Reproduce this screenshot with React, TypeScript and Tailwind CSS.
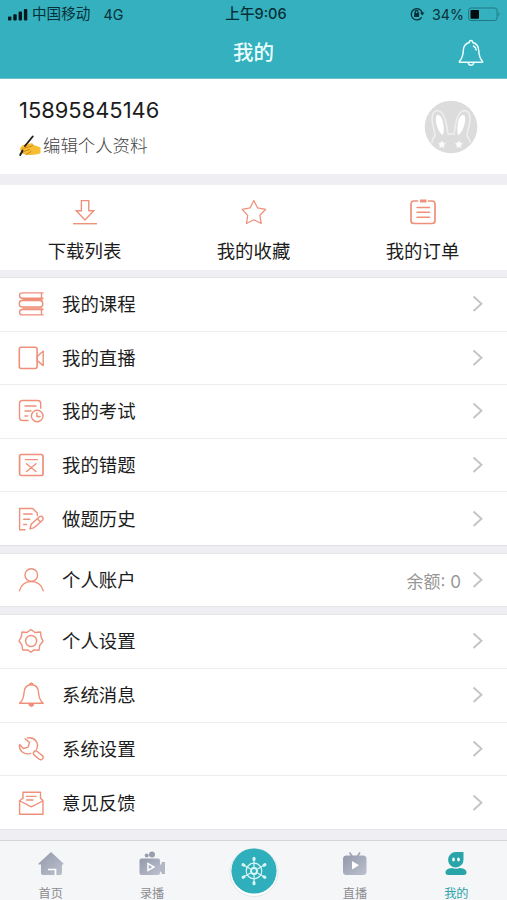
import type { ReactNode } from "react";

const CORAL = "#ee907a";

function LineIcon({ children, size = 26 }: { children: ReactNode; size?: number }) {
  return (
    <svg
      width={size}
      height={size}
      viewBox="0 0 26 26"
      fill="none"
      stroke={CORAL}
      strokeWidth="1.4"
      strokeLinecap="round"
      strokeLinejoin="round"
      className="shrink-0"
    >
      {children}
    </svg>
  );
}

const icons = {
  download: (
    <LineIcon>
      <path d="M9.4 1.6h7.4v10.2h5L13 21 4.3 11.8h5.1z" strokeLinejoin="miter" />
      <path d="M1 24.7h24" strokeLinecap="butt" />
    </LineIcon>
  ),
  star: (
    <LineIcon>
      <path d="M12.8 1.5l3.7 7.3 8.2 1.5-5.8 6 1.3 8.2-7.4-3.7-7.3 3.7 1.2-8.2-5.500-6 8-1.500z" strokeWidth="1.250" />
    </LineIcon>
  ),
  order: (
    <LineIcon>
      <path d="M7.5 2H4Q1 2 1 5v16.5q0 3 3 3h18q3 0 3-3V5q0-3-3-3h-3.5" strokeWidth="1.7" />
      <path d="M10 2h6.500" strokeWidth="3" strokeLinecap="butt" />
      <path d="M7 8.5h12.500M7 13.300h12.500M7 18.200h12.500" />
    </LineIcon>
  ),
  course: (
    <LineIcon>
      <path d="M25 1.900H4.500q-3 0-3 2.700t3 2.700H25M23.500 2v5.300M4 9.500h20M22 9.500q2.800 0 2.800 3.200T22 16H4q-2.700 0-2.700-3.200T4 9.500M25 18.500H4.500q-3 0-3 2.700t3 2.700H25M23.500 18.500v5.400" />
      <path d="M5 8.400h19M5 17.200h19" strokeWidth="1.200" />
    </LineIcon>
  ),
  live: (
    <LineIcon>
      <rect x="1.300" y="2.300" width="17.800" height="21.200" rx="2" strokeWidth="1.600" />
      <path d="M19.200 11.400l6-5.300v14.500l-6-5z" />
    </LineIcon>
  ),
  exam: (
    <LineIcon>
      <path d="M10 22.500H4.500q-3 0-3-3V5.500q0-3 3-3h15.200q3 0 3 3v4.800M7 8h11M7 13h6M7 18h2.500" />
      <circle cx="19.200" cy="18" r="5.800" />
      <path d="M18.900 15v3.500h3.200" />
    </LineIcon>
  ),
  wrong: (
    <LineIcon>
      <rect x="1.600" y="2.500" width="23.400" height="21" rx="1.800" strokeWidth="1.700" />
      <path d="M7.500 7.600h12M8.500 11.800l9.500 7.700M18 11.800l-9.500 7.700" />
    </LineIcon>
  ),
  history: (
    <LineIcon>
      <path d="M7 23.700H1.600V2.500h13l4.700 4.500v2.500M5.700 8h8.500M5.700 13.200h6M5.700 18.500h2.800" />
      <path d="M12 22.800l1.200-4.600 8.200-7.500q2-1 3.300.5 1 1.700-.5 3.200l-7.900 7.200zM19.200 12.600l3.300 3.500" />
    </LineIcon>
  ),
  account: (
    <LineIcon>
      <circle cx="13.300" cy="8" r="6.300" />
      <path d="M1.500 23.700C3 17.800 7 14.600 13.300 14.600S23.700 17.800 25.200 23.700" />
    </LineIcon>
  ),
  settings: (
    <LineIcon>
      <path d="M13 1.500L17 4.500l5.500-.5.700 5.400L25 13.200l-3.200 4-.8 5-5-.3L13 24.200l-3.300-2.300-5 .1-.8-5.100L1 13l2.300-4.200L4 4l5 .5z" />
      <circle cx="13.100" cy="13" r="5.500" />
    </LineIcon>
  ),
  message: (
    <LineIcon>
      <path d="M13.300 1v1.700M1.500 21.300c3.800-3.200 4.300-6.200 4.500-10.300C6.200 5.700 9 2.700 13.300 2.700S20.400 5.700 20.600 11c.2 4.100.9 7.100 4.600 10.300z" />
      <path d="M10.600 22h5.400q-.4 2.700-2.700 2.700T10.600 22z" fill={CORAL} strokeWidth=".6" />
      <path d="M12 2h2.500" strokeWidth="2" />
    </LineIcon>
  ),
  wrench: (
    <LineIcon>
      <path d="M7.100 2.700l4.400 3.700-1.400 4.700-4.700 1.400L1.600 8.500C.6 14.500 6 19.500 12.700 17.300M9.500 1.900C16.500.5 21.500 7 18.600 13.200" />
      <rect x="14.800" y="17" width="11" height="4.700" rx="2.200" transform="rotate(39 20.300 19.300)" />
    </LineIcon>
  ),
  feedback: (
    <LineIcon>
      <path d="M5 8.500V2.200h17.500v6.300M8.500 6.400h9.500M8.500 10h6.500M5 8l-3.400 2.700v13.500H25V10.700L22.500 8M2 11l11.300 5.800L24.700 11" />
    </LineIcon>
  ),
};

function Bell() {
  return (
    <svg width="26" height="28" viewBox="0 0 26 28" fill="none" stroke="#e9ffff" strokeWidth="1.500" strokeLinecap="round" strokeLinejoin="round">
      <path d="M11.300 3.600q0-2 1.700-2t1.700 2C18.500 4.500 20.500 7.300 20.700 11.500c.3 5.500.8 7.700 3.800 10.800q.6 1-.6 1H2.100q-1.200 0-.6-1c3-3.100 3.500-5.300 3.800-10.800.2-4.200 2.200-7 6-7.900zM10.200 23.500q.2 2.800 2.800 2.800t2.800-2.800M15.500 7q2.500 1.300 2.700 4" />
    </svg>
  );
}

function StatusBar() {
  return (
    <div className="grid h-[27px] grid-cols-3 items-center pr-[6px] pl-2 text-[14px] leading-[27px] text-[#073039]">
      <div className="flex items-center">
        <svg width="20" height="13" viewBox="0 0 20 13" fill="#03171c">
          <rect x="0" y="8.500" width="3.400" height="4" rx="1" />
          <rect x="5.300" y="6.200" width="3.400" height="6.300" rx="1" />
          <rect x="10.600" y="3.600" width="3.400" height="8.900" rx="1" />
          <rect x="15.900" y="1" width="3.400" height="11.500" rx="1" />
        </svg>
        <span className="ml-[4px] pt-[1px] text-[14.600px] whitespace-nowrap">中国移动</span>
        <span className="ml-[13px] text-[14.300px]">4G</span>
      </div>
      <div className="pt-[1px] pl-[3px] text-center text-[14.600px] font-medium whitespace-nowrap">上午9:06</div>
      <div className="flex items-center justify-end">
        <svg width="15" height="14" viewBox="0 0 15 14" fill="none" stroke="#073039" strokeWidth="1.300">
          <path d="M11.600 10.300A5.600 5.600 0 1 1 12.300 6" />
          <path d="M10 5.500h4.500l-2.200 3z" fill="#073039" stroke="none" />
          <rect x="4.100" y="6.100" width="5" height="3.800" rx=".5" fill="#073039" stroke="none" />
          <path d="M5.200 6.300V5q0-1.500 1.400-1.500T8 5v1.300" />
        </svg>
        <span className="ml-[7px] text-[14.200px]">34%</span>
        <svg className="ml-[4px]" width="33" height="15" viewBox="0 0 33 15" fill="none">
          <rect x=".6" y="1" width="28.500" height="12.500" rx="2.500" stroke="#207985" />
          <rect x="2.500" y="3" width="8.500" height="8.700" rx="1" fill="#020b0d" />
          <path d="M30.500 5q2 2.200 0 4.500z" fill="#207985" />
        </svg>
      </div>
    </div>
  );
}

function WritingHand() {
  return (
    <svg width="23" height="21" viewBox="0 0 23 21">
      <path d="M1 14.500C1.500 11.500 4 9.200 7 9.500l5-1.200c1.500-.3 2.500.7 1.800 1.700 3 .2 5.200 1.400 7.700 2.500v5.700c-4 1-7 2-11 1.700-3 0-5.500-.6-7-1.500-1.700-.2-2.300-1.600-1.300-2.700z" fill="#f7bd32" />
      <path d="M2 15.500q3.500-3.500 7-3.500M3 18q4-3.500 7.500-3.500M7 19.500q3-1.500 5-3M14 10q-1.500 1.600-4 2" fill="none" stroke="#c77d18" strokeWidth=".9" strokeLinecap="round" />
      <path d="M1.200 20L3.500 15.800M6 11L13.700 1.500" stroke="#202020" strokeWidth="1.900" strokeLinecap="round" />
    </svg>
  );
}

function Avatar() {
  return (
    <svg width="54" height="54" viewBox="0 0 54 54" fill="none">
      <circle cx="27" cy="27" r="26.300" fill="#dcdcdc" />
      <path d="M8 43c0-4 1-5 3-7 0-4-3-11-3-17 0-10 8-11 12-3 2.500 5 3 13 4 18h6c1-5 1.500-13 4-18 4-8 12-7 12 3 0 6-3 13-3 17 2 2 3 3 3 7" stroke="#efefef" strokeWidth="1.500" />
      <path d="M12 17c1-4 6-2 7 6 1 5 1 8 0 12-4-1-8-12-7-18zM41 17c-1-4-6-2-7 6-1 5-1 8 0 12 4-1 8-12 7-18z" fill="#fff" />
      <path d="M18 41l1 2 2.200.5-1.500 1.700.2 2.300-2-1-2 1 .2-2.300-1.500-1.700 2.200-.5zM35 41l1 2 2.200.5-1.500 1.700.2 2.300-2-1-2 1 .2-2.300-1.500-1.700 2.200-.5z" fill="#fbfbfb" stroke="#fbfbfb" strokeWidth=".7" strokeLinejoin="round" />
    </svg>
  );
}

function Shortcut({ icon, label }: { icon: ReactNode; label: string }) {
  return (
    <div className="flex flex-1 flex-col items-center pt-[14px]">
      {icon}
      <span className="mt-[12px] text-[18.400px] leading-[28px]">{label}</span>
    </div>
  );
}

function Row({ icon, label, value }: { icon: ReactNode; label: string; value?: string }) {
  return (
    <div className="flex min-h-0 flex-1 items-center pr-[23px] pl-[18px]">
      {icon}
      <span className="ml-[18px] flex-1 text-[18.400px] leading-[28px]">{label}</span>
      {value && <span className="mr-[11px] pt-[3px] text-[17px] leading-[26px] text-[#979797]">{value}</span>}
      <svg width="12" height="18" viewBox="0 0 12 18" fill="none" stroke="#c4c4c7" strokeWidth="1.900">
        <path d="M1.500 1.500L9.500 8.700l-8 7.300" />
      </svg>
    </div>
  );
}

const tabGrey = "url(#tab-grey)";

function Tab({ label, active, children }: { label: string; active?: boolean; children: ReactNode }) {
  return (
    <div className={`flex flex-1 flex-col items-center pt-[10px] ${active ? "text-[#2ba4a9]" : "text-[#8c8c90]"}`}>
      <svg width="28" height="26" viewBox="0 0 28 26" className="shrink-0">
        {children}
      </svg>
      <span className="mt-[7px] text-[12.200px] leading-[19px]">{label}</span>
    </div>
  );
}

function WheelButton() {
  return (
    <div className="flex flex-1 justify-center pt-[5px]">
      <svg width="52" height="52" viewBox="0 0 52 52" className="overflow-visible" fill="none" stroke="#d9f5f6">
        <circle cx="26" cy="26.500" r="24" fill="#fff" stroke="#e3e7ea" />
        <circle cx="26" cy="25" r="22.600" fill="#2faebb" stroke="none" />
        <circle cx="26" cy="25" r="7.800" strokeWidth="1.200" />
        <circle cx="26" cy="25" r="3" strokeWidth="2" />
        {[0, 60, 120, 180, 240, 300].map((angle) => (
          <g key={angle} transform={`rotate(${angle} 26 25)`}>
            <path d="M26 21V12.500" strokeWidth="1.200" />
            <path d="M26 13.500V12.300" strokeWidth="3" strokeLinecap="round" />
          </g>
        ))}
      </svg>
    </div>
  );
}

export default function App() {
  return (
    <div className="flex h-[900px] w-[507px] flex-col overflow-hidden bg-[#efeff3] font-['Inter','Noto_Sans_CJK_SC',sans-serif] text-[#1c1c1c]">
      <header className="h-[79px] shrink-0 border-b border-[#72bfc9] bg-[#34b0be]">
        <StatusBar />
        <div className="grid h-[51px] grid-cols-3 items-center">
          <span />
          <h1 className="text-center text-[20.500px] leading-[30px] font-medium text-[#e9ffff]">我的</h1>
          <div className="flex justify-end pr-[23px]">
            <Bell />
          </div>
        </div>
      </header>

      <section className="flex h-[95px] shrink-0 items-center justify-between bg-white pr-[29px] pl-[19px]">
        <div className="flex flex-col pt-[1px]">
          <span className="text-[21.900px] leading-[30px]">15895845146</span>
          <span className="mt-[6px] flex items-center text-[17.400px] leading-[28px] font-light text-[#444]">
            <WritingHand />
            <span className="ml-[1px] pt-[1px]">编辑个人资料</span>
          </span>
        </div>
        <Avatar />
      </section>

      <section className="mt-[11px] flex h-[85px] shrink-0 bg-white">
        <Shortcut icon={icons.download} label="下载列表" />
        <Shortcut icon={icons.star} label="我的收藏" />
        <Shortcut icon={icons.order} label="我的订单" />
      </section>

      <section className="mt-[7px] flex h-[269px] shrink-0 flex-col divide-y divide-[#ececee] border-y border-[#e2e2e6] bg-white">
        <Row icon={icons.course} label="我的课程" />
        <Row icon={icons.live} label="我的直播" />
        <Row icon={icons.exam} label="我的考试" />
        <Row icon={icons.wrong} label="我的错题" />
        <Row icon={icons.history} label="做题历史" />
      </section>

      <section className="mt-[7px] flex h-[54px] shrink-0 flex-col border-y border-[#e5e5e8] bg-white">
        <Row icon={icons.account} label="个人账户" value="余额: 0" />
      </section>

      <section className="mt-[7px] flex h-[216px] shrink-0 flex-col divide-y divide-[#ececee] border-y border-[#e5e5e8] bg-white">
        <Row icon={icons.settings} label="个人设置" />
        <Row icon={icons.message} label="系统消息" />
        <Row icon={icons.wrench} label="系统设置" />
        <Row icon={icons.feedback} label="意见反馈" />
      </section>

      <nav className="mt-auto flex h-[60px] shrink-0 border-t border-[#d5d6da] bg-[#f5f6f8]">
        <Tab label="首页">
          <defs>
            <linearGradient id="tab-grey" x1="0" y1="0" x2="1" y2="1">
              <stop offset="0" stopColor="#9499ab" />
              <stop offset="1" stopColor="#bcc1cf" />
            </linearGradient>
          </defs>
          <path d="M14 1L26.500 12.500q.6 1-.6 1H25v8.500q0 2-2 2H6q-2 0-2-2v-8.500H2.100q-1.200 0-.6-1z" fill={tabGrey} />
          <path d="M11 18.500h7.500V24" fill="none" stroke="#fff" strokeWidth="1.700" />
        </Tab>
        <Tab label="录播">
          <circle cx="8.700" cy="4.500" r="2" fill="#999eaf" />
          <circle cx="14" cy="3.500" r="3" fill="#999eaf" />
          <rect x="1.500" y="7.500" width="20.500" height="16.500" rx="2" fill={tabGrey} />
          <path d="M22 14l1.500-1.200V11H27v12h-3.500v-1.500L22 20.300z" fill="#b2b7c6" />
          <path d="M10 12.500v7l6-3.500z" fill="none" stroke="#fff" strokeWidth="1.500" />
        </Tab>
        <WheelButton />
        <Tab label="直播">
          <path d="M8.500 1.500L11 5M19 1.500L16.500 5" stroke="#9da2b2" strokeWidth="1.600" />
          <rect x="2" y="4.500" width="23.500" height="19.500" rx="3.500" fill={tabGrey} />
          <path d="M11 10v8.500l7-4.200z" fill="#fff" />
        </Tab>
        <Tab label="我的" active>
          <path d="M14 1h7.500v7.500A7.700 7.700 0 1 1 14 1z" fill="#29a5aa" />
          <path d="M3.500 21.500c0-3 3-4 6.500-4.500q4 1.500 8 0c3.500.5 6.500 1.500 6.500 4.500q0 2.500-3 2.500h-15q-3 0-3-2.500z" fill="#29a5aa" />
          <ellipse cx="11.500" cy="8.500" rx="1.300" ry="1.900" fill="#fff" />
          <ellipse cx="16.500" cy="8.500" rx="1.300" ry="1.900" fill="#fff" />
        </Tab>
      </nav>
    </div>
  );
}
